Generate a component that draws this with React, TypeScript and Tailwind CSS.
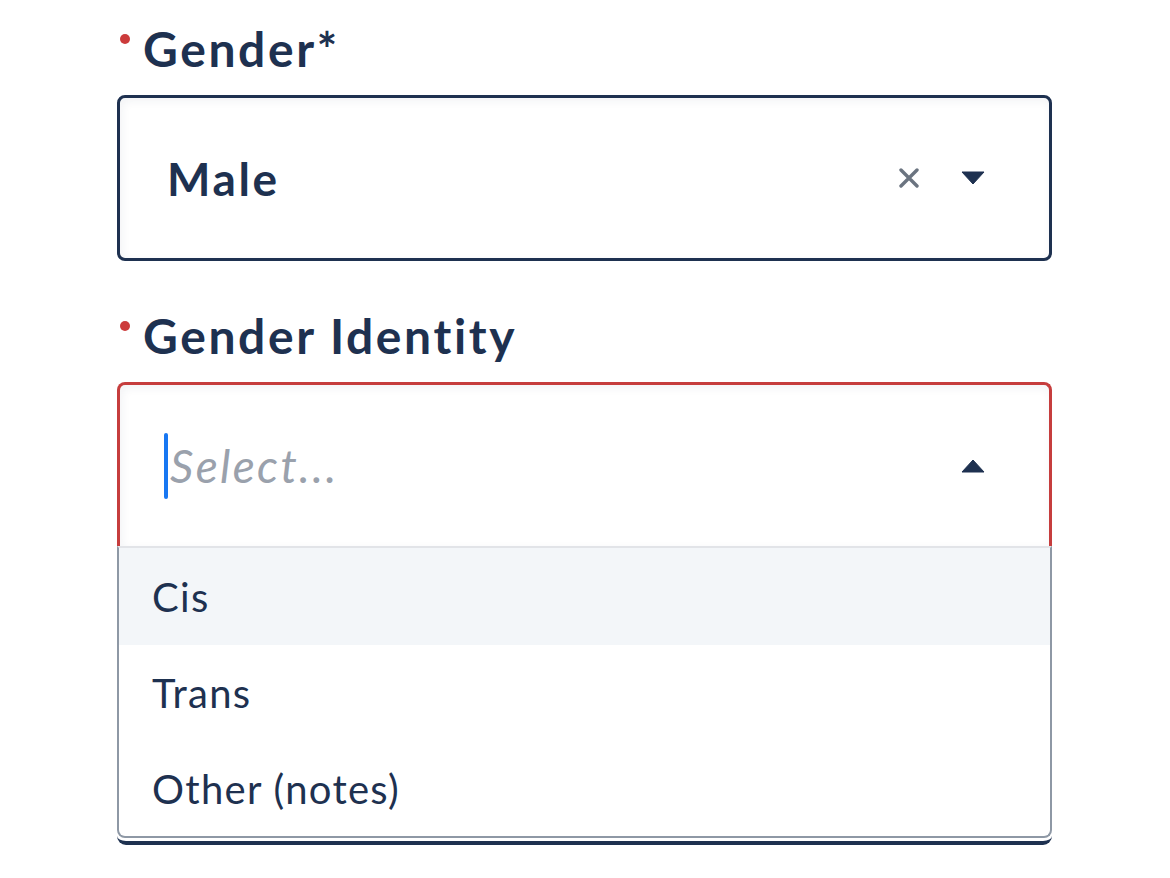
import React from "react";

const navy = "text-[#1e3150]";

function Label({ text }: { text: string }) {
  return (
    <div className="flex items-start">
      <span className="mt-[9px] ml-[3px] h-[10px] w-[10px] shrink-0 rounded-full bg-[#cc3b3b]" />
      <span className={`ml-[13px] text-[48px] font-bold leading-[48px] tracking-[2.6px] ${navy}`}>{text}</span>
    </div>
  );
}

export default function App() {
  return (
    <div
      className="min-h-[878px] w-[1170px] bg-white pl-[117px] pr-[118px] pt-[25px]"
      style={{ fontFamily: "Lato, 'Open Sans', sans-serif" }}
    >
      <Label text="Gender*" />
      <div className="mt-[22px] flex h-[166px] items-center rounded-[8px] border-[3px] border-[#1e3150] bg-white pl-[47px] pr-[64px] shadow-[inset_2px_3px_10px_rgba(30,49,80,0.06)]">
        <span className={`flex-1 text-[46px] font-bold tracking-[2.6px] ${navy}`}>Male</span>
        <svg width="20" height="20" viewBox="0 0 20 20" className="mr-[42px]">
          <path d="M2 2 L18 18 M18 2 L2 18" stroke="#6b7480" strokeWidth="3.4" strokeLinecap="round" />
        </svg>
        <svg width="24" height="14" viewBox="0 0 24 14">
          <path d="M1 1 L23 1 L12 13 Z" fill="#1e3150" stroke="#1e3150" strokeWidth="1" strokeLinejoin="round" />
        </svg>
      </div>

      <div className="mt-[51px]">
        <Label text="Gender Identity" />
      </div>

      <div className="mt-[22px] rounded-b-[9px] border-b-[4px] border-[#1e3150] pb-[3px]">
        <div className="flex h-[164px] items-center rounded-t-[8px] border-x-[3px] border-t-[3px] border-[#c63d3d] bg-white pl-[44px] pr-[64px] shadow-[inset_2px_3px_10px_rgba(30,49,80,0.06)]">
          <span className="h-[66px] w-[4px] rounded-full bg-[#1877f2]" />
          <span className="ml-[2px] flex-1 text-[46px] italic tracking-[2.4px] text-[#9aa1ac]">Select...</span>
          <svg width="24" height="14" viewBox="0 0 24 14">
            <path d="M1 13 L23 13 L12 1 Z" fill="#1e3150" stroke="#1e3150" strokeWidth="1" strokeLinejoin="round" />
          </svg>
        </div>
        <div className="rounded-b-[8px] border-x-[2px] border-b-[2px] border-t-[2px] border-x-[#8e98a5] border-b-[#8e98a5] border-t-[#e2e4e8] bg-white">
          <div className={`flex h-[97px] items-center bg-[#f3f6f9] pl-[33px] text-[40px] tracking-[1.3px] ${navy}`}>Cis</div>
          <div className={`flex h-[96px] items-center pl-[33px] text-[40px] tracking-[1.3px] ${navy}`}>Trans</div>
          <div className={`flex h-[95px] items-center pl-[33px] text-[40px] tracking-[1.3px] ${navy}`}>Other (notes)</div>
        </div>
      </div>
    </div>
  );
}
